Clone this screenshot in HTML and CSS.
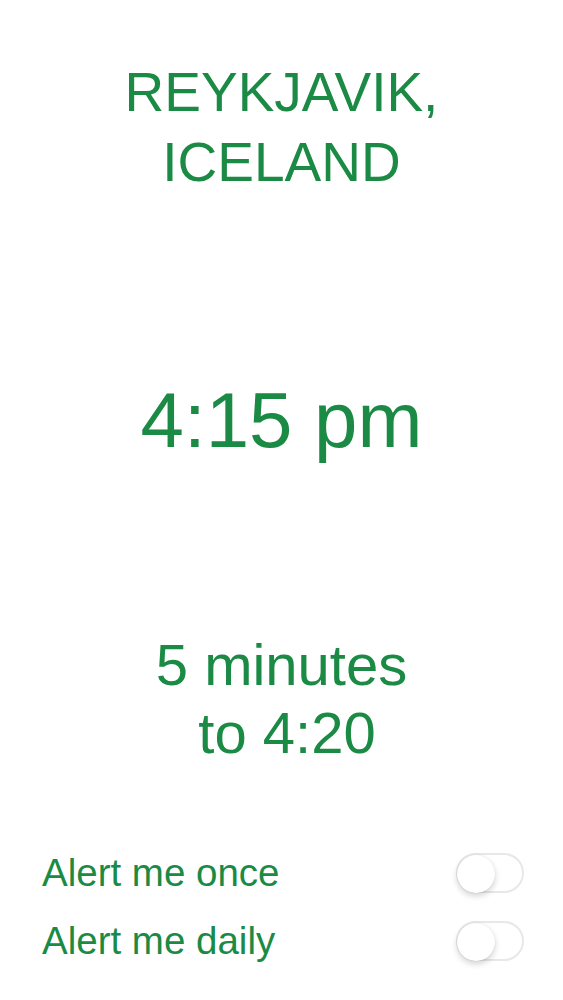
FILE: index.html
```html
<!DOCTYPE html>
<html lang="en">
<head>
<meta charset="utf-8">
<title>Reykjavik</title>
<link rel="stylesheet" href="styles.css">
</head>
<body>
<div class="screen">
  <h1 class="city">REYKJAVIK,<br>ICELAND</h1>
  <div class="time">4:15 pm</div>
  <div class="relative">5 minutes<br><span class="indent">to 4:20</span></div>
  <div class="alerts">
    <div class="row">
      <span class="label">Alert me once</span>
      <span class="switch"><span class="knob"></span></span>
    </div>
    <div class="row">
      <span class="label">Alert me daily</span>
      <span class="switch"><span class="knob"></span></span>
    </div>
  </div>
</div>
</body>
</html>
```

FILE: styles.css
```css
html, body {
  margin: 0;
  padding: 0;
  background: #ffffff;
}

.screen {
  width: 563px;
  height: 1000px;
  display: flex;
  flex-direction: column;
  align-items: center;
  color: #1a8a44;
  font-family: "Liberation Sans", Arial, sans-serif;
  box-sizing: border-box;
  padding-top: 57px;
}

.city {
  margin: 0;
  font-weight: normal;
  font-size: 55px;
  line-height: 70px;
  text-align: center;
}

.time {
  margin-top: 184px;
  font-size: 78px;
  line-height: 78px;
  text-align: center;
}

.relative {
  margin-top: 172px;
  font-size: 58px;
  line-height: 68px;
  text-align: center;
}

.indent {
  padding-left: 11px;
}

.alerts {
  margin-top: 76px;
  width: 100%;
  box-sizing: border-box;
  padding: 0 39px 0 42px;
  display: flex;
  flex-direction: column;
  gap: 8px;
}

.row {
  height: 60px;
  display: flex;
  align-items: center;
  justify-content: space-between;
}

.label {
  font-size: 38.5px;
}

.switch {
  width: 68px;
  height: 40px;
  box-sizing: border-box;
  border: 2px solid #e8e8e8;
  border-radius: 20px;
  background: #ffffff;
  display: flex;
  align-items: center;
}

.knob {
  width: 38px;
  height: 38px;
  border-radius: 50%;
  background: #ffffff;
  margin-left: -1px;
  margin-top: 2px;
  box-shadow: 0 3px 6px rgba(0, 0, 0, 0.18), 0 0 1px rgba(0, 0, 0, 0.12);
}
```
